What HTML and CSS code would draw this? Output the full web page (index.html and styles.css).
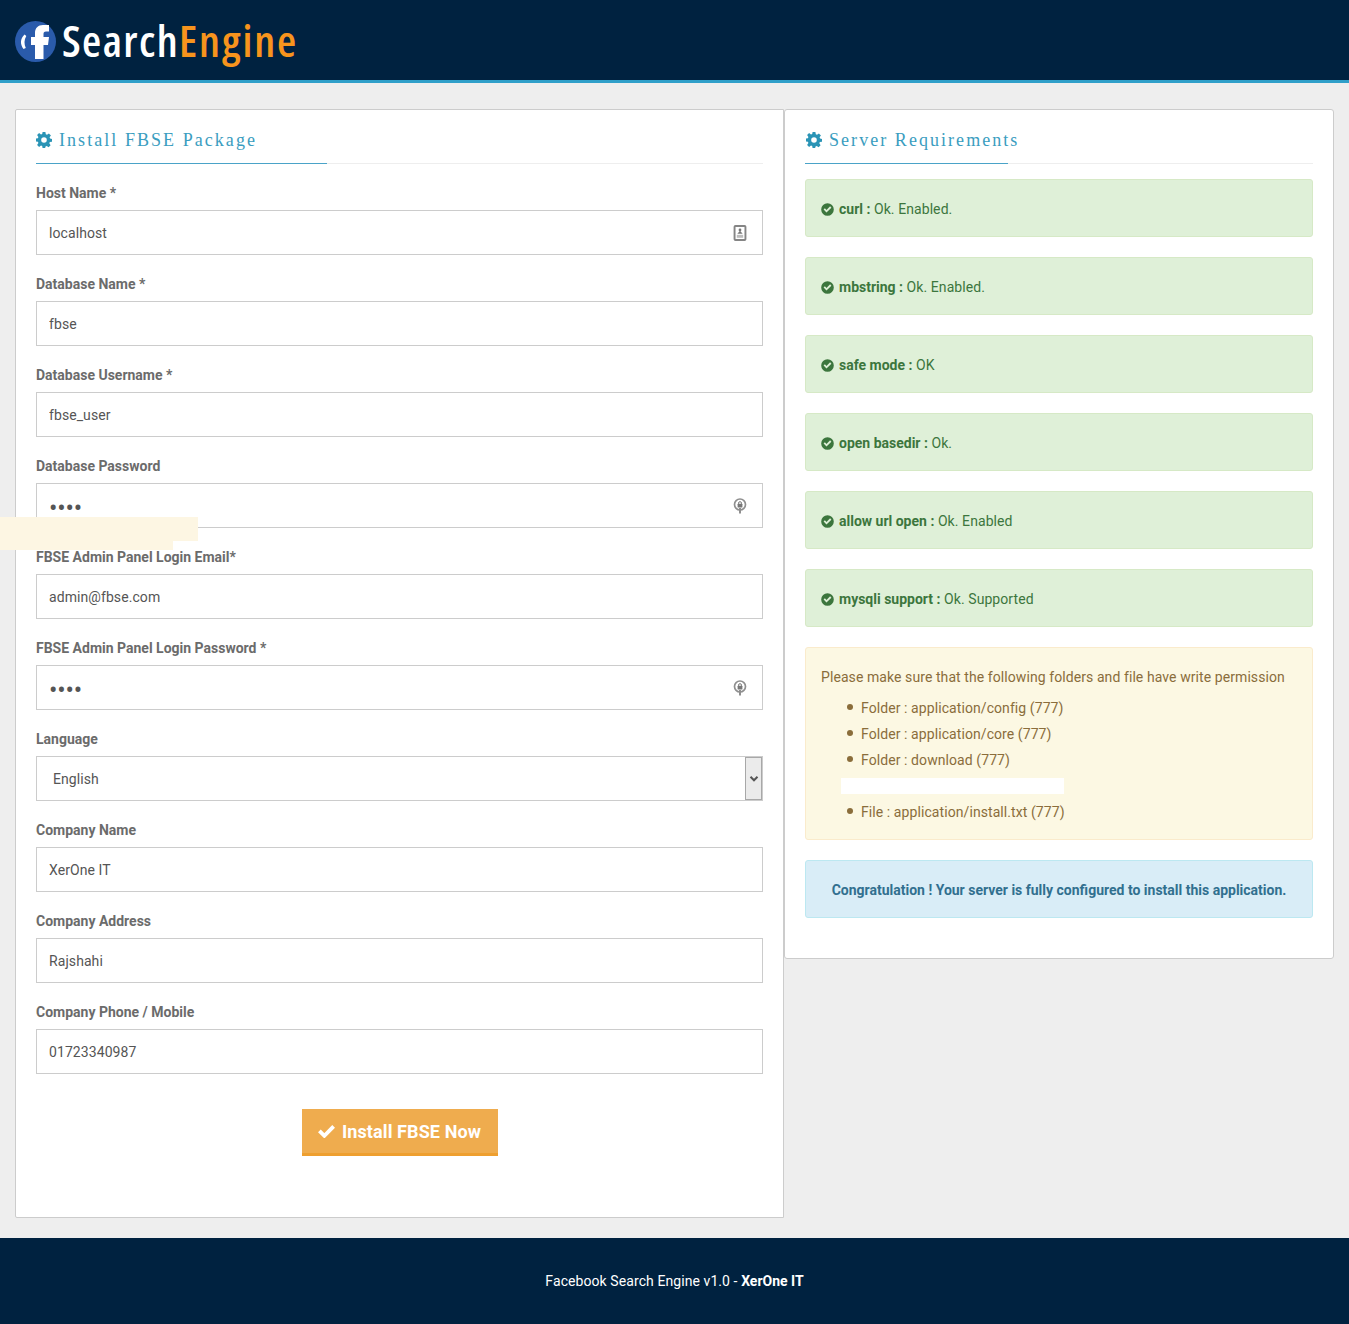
FILE: index.html
```html
<!DOCTYPE html>
<html lang="en">
<head>
<meta charset="utf-8">
<title>Install FBSE</title>
<link rel="stylesheet" href="styles.css">
</head>
<body>
<svg class="defs" width="0" height="0" aria-hidden="true">
  <symbol id="gear" viewBox="0 0 16 16"><path fill-rule="evenodd" d="M6.600 0h2.800l.4 2.200 1.200.5L12.900 1.400l2 2-1.300 1.900.5 1.200 1.900.4v2.800l-2.200.4-.5 1.200 1.300 1.900-2 2-1.900-1.300-1.200.5-.4 1.900H6.600l-.4-2.200-1.200-.5-1.900 1.300-2-2 1.300-1.900-.5-1.200L0 9.400V6.600l1.900-.4.500-1.200-1.300-1.900 2-2L5 2.400l1.200-.5zM8 5.200a2.800 2.800 0 1 0 0 5.600 2.800 2.800 0 0 0 0-5.600z"/></symbol>
  <symbol id="okc" viewBox="1 1 14 14"><path fill-rule="evenodd" d="M8 1.200a6.800 6.800 0 1 1 0 13.600A6.800 6.800 0 0 1 8 1.200zM3.800 8.100l3.100 3.200 5.300-5.300-1.400-1.400-3.900 3.900-1.700-1.800z"/></symbol>
  <symbol id="lockring" viewBox="0 0 14 16"><circle cx="7" cy="6.500" r="5.500" fill="none" stroke="#8f8f8f" stroke-width="1.700"/><circle cx="7" cy="5.200" r="1.500" fill="none" stroke="#777" stroke-width="1"/><rect x="4.600" y="5.800" width="4.800" height="3.800" rx=".5" fill="#777"/><path d="M7 10v5.500" stroke="#8f8f8f" stroke-width="2"/></symbol>
</svg>
<header class="topbar">
  <div class="logo">
    <svg class="logo-mark" viewBox="0 0 41 41" aria-hidden="true">
      <circle cx="20.500" cy="20.500" r="20.500" fill="#2a5bab"/>
      <path fill="#fff" d="M20 38V24H16V16H20V12C20 7 23 4 28 4H34V10.500H31C29 10.500 28.500 11.500 28.500 13V16H34L33 24H28.500V38Z"/>
      <path fill="#fff" d="M9.500 13.500C5 18 5 23 8.500 28L10.800 27C9 23 9 19 11.300 15Z"/>
    </svg>
    <span class="logo-text">Search<span class="logo-accent">Engine</span></span>
  </div>
</header>

<main class="content">
  <section class="card card-form">
    <h2 class="card-title"><svg class="gear"><use href="#gear"/></svg>Install FBSE Package</h2>
    <form class="form">
      <div class="field"><label>Host Name *</label><div class="control"><input type="text" value="localhost"><svg class="ficon" viewBox="0 0 12 15"><rect x=".9" y=".9" width="10.200" height="13.200" rx=".8" fill="none" stroke="#858585" stroke-width="1.800"/><circle cx="6" cy="4.600" r="1.300" fill="#777"/><path d="M3.500 8.300 6 5.500l2.500 2.800z" fill="#777"/><rect x="3" y="9.200" width="6" height="2.800" fill="#bdbdbd"/></svg></div></div>
      <div class="field"><label>Database Name *</label><div class="control"><input type="text" value="fbse"></div></div>
      <div class="field"><label>Database Username *</label><div class="control"><input type="text" value="fbse_user"></div></div>
      <div class="field"><label>Database Password</label><div class="control"><input type="password" value="fbse"><svg class="ficon"><use href="#lockring"/></svg></div></div>
      <div class="field"><label>FBSE Admin Panel Login Email*</label><div class="control"><input type="text" value="admin@fbse.com"></div></div>
      <div class="field"><label>FBSE Admin Panel Login Password *</label><div class="control"><input type="password" value="fbse"><svg class="ficon"><use href="#lockring"/></svg></div></div>
      <div class="field"><label>Language</label><div class="control"><select><option>English</option></select><span class="select-btn"><svg viewBox="0 0 10 8" width="10" height="8"><path d="M1.500 1.800 5 5.300l3.500-3.500" fill="none" stroke="#555" stroke-width="2"/></svg></span></div></div>
      <div class="field"><label>Company Name</label><div class="control"><input type="text" value="XerOne IT"></div></div>
      <div class="field"><label>Company Address</label><div class="control"><input type="text" value="Rajshahi"></div></div>
      <div class="field"><label>Company Phone / Mobile</label><div class="control"><input type="text" value="01723340987"></div></div>
      <div class="actions"><button type="button" class="btn"><svg class="btn-check" viewBox="0 0 16 13"><path d="M1.300 6.300 6 11 14.700 2.200" fill="none" stroke="#fff" stroke-width="3.600"/></svg>Install FBSE Now</button></div>
    </form>
    <div class="patch patch-a"></div>
    <div class="patch patch-b"></div>
  </section>

  <section class="card card-req">
    <h2 class="card-title"><svg class="gear"><use href="#gear"/></svg>Server Requirements</h2>
    <div class="alert ok"><svg class="okc"><use href="#okc"/></svg><span><b>curl :</b> Ok. Enabled.</span></div>
    <div class="alert ok"><svg class="okc"><use href="#okc"/></svg><span><b>mbstring :</b> Ok. Enabled.</span></div>
    <div class="alert ok"><svg class="okc"><use href="#okc"/></svg><span><b>safe mode :</b> OK</span></div>
    <div class="alert ok"><svg class="okc"><use href="#okc"/></svg><span><b>open basedir :</b> Ok.</span></div>
    <div class="alert ok"><svg class="okc"><use href="#okc"/></svg><span><b>allow url open :</b> Ok. Enabled</span></div>
    <div class="alert ok"><svg class="okc"><use href="#okc"/></svg><span><b>mysqli support :</b> Ok. Supported</span></div>
    <div class="alert warn">
      <p>Please make sure that the following folders and file have write permission</p>
      <ul>
        <li>Folder : application/config (777)</li>
        <li>Folder : application/core (777)</li>
        <li>Folder : download (777)</li>
        <li class="blank"></li>
        <li>File : application/install.txt (777)</li>
      </ul>
    </div>
    <div class="alert info"><b>Congratulation ! Your server is fully configured to install this application.</b></div>
  </section>
</main>

<footer class="footer">Facebook Search Engine v1.0 - <b>XerOne IT</b></footer>
</body>
</html>
```
FILE: styles.css
```css
* { box-sizing: border-box; }
html, body { margin: 0; padding: 0; }
body { background: #eee; font-family: Roboto, "Liberation Sans", sans-serif; font-size: 14px; letter-spacing: .08px; color: #555; position: relative; }
b { letter-spacing: 0; }
.defs { position: absolute; }

.topbar { height: 83px; background: #002240; border-bottom: 3px solid #2f9fc9; padding-left: 15px; display: flex; align-items: center; }
.logo { display: flex; align-items: center; gap: 6px; height: 80px; }
.logo-mark { width: 41px; height: 41px; flex: none; margin-top: 2px; }
.logo-text { font-family: "Open Sans", sans-serif; font-stretch: 75%; font-size: 44px; font-weight: 600; color: #fff; line-height: 1; letter-spacing: 1.400px; margin-top: -1px; }
.logo-accent { color: #f7941d; letter-spacing: 1.900px; }

.content { display: flex; align-items: flex-start; padding: 26px 15px 20px; }
.card { background: #fff; border: 1px solid #ccc; padding: 20px; position: relative; }
.card-form { width: 769px; height: 1109px; border-radius: 2px 0 0 2px; }
.card-req { width: 550px; height: 850px; border-radius: 3px; }

.card-title { font-family: "Liberation Serif", serif; font-weight: 400; font-size: 18px; letter-spacing: 2.050px; color: #3a9dc0; margin: 0; height: 34px; line-height: 21px; border-bottom: 1px solid #eee; position: relative; display: flex; align-items: flex-start; }
.card-title::after { content: ""; position: absolute; left: 0; bottom: -1px; width: 40%; height: 1px; background: #4aa3c8; }
.card-req .card-title { margin-bottom: 15px; }
.card-req .gear { margin-left: 1px; }
.gear { width: 16px; height: 16px; fill: #2a94b6; margin: 2px 7px 0 0; flex: none; }

.form { padding-top: 9px; }
.field { height: 91px; padding-top: 12px; }
.field label { display: block; font-weight: 700; color: #6b6b6b; line-height: 17px; height: 17px; margin-bottom: 8px; letter-spacing: 0; }
.control { position: relative; }
.control input, .control select { display: block; width: 100%; height: 45px; border: 1px solid #ccc; border-radius: 0; background: #fff; padding: 0 12px; font: 14px Roboto, sans-serif; letter-spacing: .08px; color: #555; outline: 0; }
.control input[type="password"] { font-size: 25px; letter-spacing: -.2px; padding-top: 6px; padding-right: 40px; }
.control select { appearance: none; padding-left: 16px; }
.select-btn { position: absolute; right: 1px; top: 1px; width: 17px; height: 43px; border: 1px solid #a8a8a8; background: #ebebeb; display: flex; align-items: center; justify-content: center; }
.ficon { position: absolute; right: 16px; top: 15px; width: 14px; height: 16px; }

.actions { display: flex; justify-content: center; padding-top: 26px; }
.btn { width: 196px; height: 47px; background: #efac4e; border: 0; border-bottom: 3px solid #ee9f2f; color: #fff; font: 700 18px Roboto, sans-serif; letter-spacing: .1px; display: flex; align-items: center; justify-content: center; gap: 7px; padding: 0; }
.btn-check { width: 17px; height: 14px; }

.patch { position: absolute; background: #fdf6e3; left: -16px; }
.patch-a { top: 407px; width: 198px; height: 24px; }
.patch-b { top: 431px; width: 173px; height: 9px; }

.alert { border: 1px solid; border-radius: 3px; padding: 0 15px; margin-bottom: 20px; line-height: 20px; }
.alert.ok { height: 58px; background: #dff0d8; border-color: #d6e9c6; color: #3c763d; display: flex; align-items: center; white-space: pre; padding-top: 2px; }
.okc { width: 13px; height: 13px; fill: #3c763d; margin-right: 5px; flex: none; }
.alert.warn { height: 193px; background: #fcf8e3; border-color: #faebcc; color: #8a6d3b; padding-top: 19px; }
.alert.warn p { margin: 0 0 11px; }
.alert.warn ul { margin: 0; padding: 0 0 0 40px; list-style: none; }
.alert.warn li { height: 26px; line-height: 20px; display: flex; align-items: flex-start; }
.alert.warn li::before { content: ""; flex: none; width: 6px; height: 6px; border-radius: 50%; background: #8a6d3b; margin: 6px 8px 0 -14px; }
.alert.warn li.blank { height: 16px; width: 223px; margin: 2px 0 8px -20px; background: #fff; }
.alert.warn li.blank::before { display: none; }
.alert.info { height: 58px; background: #d9edf7; border-color: #bce8f1; color: #31708f; display: flex; align-items: center; justify-content: center; padding-top: 2px; }

.footer { height: 86px; line-height: 86px; background: #002240; color: #fff; text-align: center; }
```
